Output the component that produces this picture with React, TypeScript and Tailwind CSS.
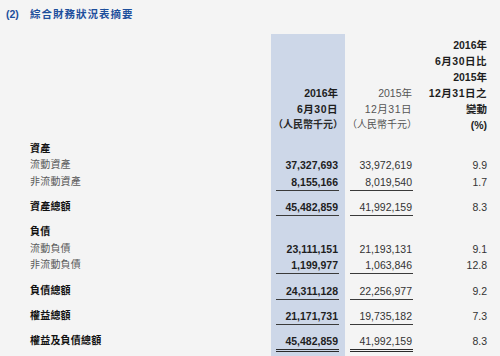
import React from "react";

const FONT = "font-['Liberation_Sans','Noto_Sans_CJK_TC',sans-serif]";

type Under = "none" | "single" | "double";

function Row({
  label,
  bold = false,
  v1 = "",
  v2 = "",
  v3 = "",
  pt = 0,
  under = "none",
}: {
  label: string;
  bold?: boolean;
  v1?: string;
  v2?: string;
  v3?: string;
  pt?: number;
  under?: Under;
}) {
  const ptClass =
    pt === 0
      ? "pt-0"
      : pt === 1
      ? "pt-[1px]"
      : pt === 8
      ? "pt-[8px]"
      : pt === 9
      ? "pt-[9px]"
      : "pt-0";
  const uClass =
    under === "single"
      ? "border-b border-[#3a3a3a]"
      : under === "double"
      ? "border-b-[3px] border-double border-[#2a2a2a]"
      : "";
  return (
    <div className="flex">
      <div
        className={`w-[271px] pl-[30px] ${ptClass} leading-[16px] text-[10px] tracking-[0.2px] ${
          bold ? "font-bold text-[#111]" : "text-[#5a5a5a]"
        }`}
      >
        {label}
      </div>
      <div className={`w-[74px] bg-[#cdd7e8] ${ptClass} flex`}>
        <div
          className={`w-[63px] ml-[5px] pr-[1px] text-right leading-[16px] text-[10.5px] font-bold text-[#1e1e1e] ${uClass}`}
        >
          {v1}
        </div>
      </div>
      <div className={`w-[75px] ${ptClass} flex`}>
        <div
          className={`w-[63px] ml-[5px] pr-[1px] text-right leading-[16px] text-[10.5px] text-[#333] ${uClass}`}
        >
          {v2}
        </div>
      </div>
      <div
        className={`flex-1 pr-[13px] ${ptClass} text-right leading-[16px] text-[10.5px] text-[#333]`}
      >
        {v3}
      </div>
    </div>
  );
}

export default function App() {
  return (
    <div className={`w-[500px] h-[356px] bg-[#f4f4f4] overflow-hidden ${FONT}`}>
      <div className="h-[34px] pt-[6px] pl-[6px] flex leading-[16px] text-[10.5px] font-bold text-[#1d4f9c]">
        <span className="w-[24px]">(2)</span>
        <span className="tracking-[1px]">綜合財務狀況表摘要</span>
      </div>

      {/* header */}
      <div className="flex h-[99px]">
        <div className="w-[271px]" />
        <div className="w-[74px] bg-[#cdd7e8] flex flex-col justify-end pr-[7px] text-right leading-[16px] text-[10.5px] font-bold text-[#1e1e1e]">
          <div>2016年</div>
          <div className="tracking-[0.5px]">6月30日</div>
          <div className="[font-feature-settings:'halt'] text-[10px] text-[#2a2a2a]">（人民幣千元）</div>
        </div>
        <div className="w-[75px] flex flex-col justify-end pr-[8px] text-right leading-[16px] text-[10.5px] text-[#555]">
          <div>2015年</div>
          <div className="tracking-[0.5px]">12月31日</div>
          <div className="[font-feature-settings:'halt'] text-[10px]">（人民幣千元）</div>
        </div>
        <div className="flex-1 flex flex-col justify-end pr-[13px] text-right leading-[16px] text-[10.5px] font-bold text-[#1e1e1e]">
          <div>2016年</div>
          <div className="tracking-[0.5px]">6月30日比</div>
          <div>2015年</div>
          <div className="tracking-[0.5px]">12月31日之</div>
          <div>變動</div>
          <div>(%)</div>
        </div>
      </div>

      <Row label="資產" bold pt={8} />
      <Row label="流動資產" v1="37,327,693" v2="33,972,619" v3="9.9" pt={0} />
      <Row label="非流動資產" v1="8,155,166" v2="8,019,540" v3="1.7" pt={1} under="single" />
      <Row label="資產總額" bold v1="45,482,859" v2="41,992,159" v3="8.3" pt={8} under="single" />
      <Row label="負債" bold pt={8} />
      <Row label="流動負債" v1="23,111,151" v2="21,193,131" v3="9.1" pt={1} />
      <Row label="非流動負債" v1="1,199,977" v2="1,063,846" v3="12.8" pt={0} under="single" />
      <Row label="負債總額" bold v1="24,311,128" v2="22,256,977" v3="9.2" pt={9} under="single" />
      <Row label="權益總額" bold v1="21,171,731" v2="19,735,182" v3="7.3" pt={8} under="single" />
      <Row label="權益及負債總額" bold v1="45,482,859" v2="41,992,159" v3="8.3" pt={8} under="double" />
      <div className="flex h-[4px]">
        <div className="w-[271px]" />
        <div className="w-[74px] bg-[#cdd7e8]" />
      </div>
    </div>
  );
}
